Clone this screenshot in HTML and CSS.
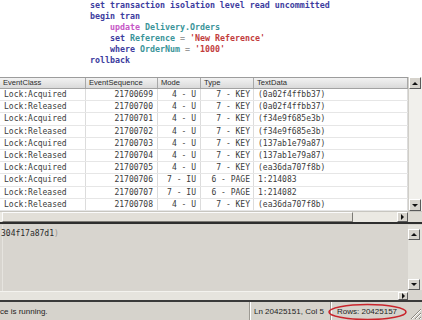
FILE: index.html
```html
<!DOCTYPE html>
<html>
<head>
<meta charset="utf-8">
<link rel="stylesheet" href="styles.css">
</head>
<body>
<div class="app">
  <pre class="editor"><span class="kw">set transaction isolation level read uncommitted</span>
<span class="kw">begin tran</span>
    <span class="dml">update</span> <span class="id">Delivery.Orders</span>
    <span class="kw">set</span> <span class="id">Reference</span> <span class="op">=</span> <span class="str">'New Reference'</span>
    <span class="kw">where</span> <span class="id">OrderNum</span> <span class="op">=</span> <span class="str">'1000'</span>
<span class="kw">rollback</span></pre>

  <div class="results">
    <div class="grid-area">
      <div class="grid">
        <div class="row head">
          <div class="c">EventClass</div>
          <div class="c">EventSequence</div>
          <div class="c">Mode</div>
          <div class="c">Type</div>
          <div class="c">TextData</div>
        </div>
        <div class="row"><div class="c">Lock:Acquired</div><div class="c r">21700699</div><div class="c r">4 - U</div><div class="c r t">7 - KEY</div><div class="c">(0a02f4ffbb37)</div></div>
        <div class="row"><div class="c">Lock:Released</div><div class="c r">21700700</div><div class="c r">4 - U</div><div class="c r t">7 - KEY</div><div class="c">(0a02f4ffbb37)</div></div>
        <div class="row"><div class="c">Lock:Acquired</div><div class="c r">21700701</div><div class="c r">4 - U</div><div class="c r t">7 - KEY</div><div class="c">(f34e9f685e3b)</div></div>
        <div class="row"><div class="c">Lock:Released</div><div class="c r">21700702</div><div class="c r">4 - U</div><div class="c r t">7 - KEY</div><div class="c">(f34e9f685e3b)</div></div>
        <div class="row"><div class="c">Lock:Acquired</div><div class="c r">21700703</div><div class="c r">4 - U</div><div class="c r t">7 - KEY</div><div class="c">(137ab1e79a87)</div></div>
        <div class="row"><div class="c">Lock:Released</div><div class="c r">21700704</div><div class="c r">4 - U</div><div class="c r t">7 - KEY</div><div class="c">(137ab1e79a87)</div></div>
        <div class="row"><div class="c">Lock:Acquired</div><div class="c r">21700705</div><div class="c r">4 - U</div><div class="c r t">7 - KEY</div><div class="c">(ea36da707f8b)</div></div>
        <div class="row"><div class="c">Lock:Acquired</div><div class="c r">21700706</div><div class="c r">7 - IU</div><div class="c r t">6 - PAGE</div><div class="c">1:214083</div></div>
        <div class="row"><div class="c">Lock:Released</div><div class="c r">21700707</div><div class="c r">7 - IU</div><div class="c r t">6 - PAGE</div><div class="c">1:214082</div></div>
        <div class="row"><div class="c">Lock:Released</div><div class="c r">21700708</div><div class="c r">4 - U</div><div class="c r t">7 - KEY</div><div class="c">(ea36da707f8b)</div></div>
      </div>
      <div class="vscroll">
        <div class="btn"><span class="arr up"></span></div>
        <div class="track"></div>
        <div class="btn"><span class="arr down"></span></div>
      </div>
    </div>
    <div class="hbar">
      <div class="htrack"><div class="hthumb"></div></div>
      <div class="btn hbtn"><span class="arr right"></span></div>
      <div class="corner"></div>
    </div>
  </div>

  <div class="splitter"></div>

  <div class="pane">
    <div class="pane-main">
      <div class="pane-text">304f17a87d1<span class="dim">)</span></div>
      <div class="hbar2">
        <div class="htrack2"></div>
        <div class="btn hbtn2"><span class="arr right"></span></div>
      </div>
    </div>
    <div class="vscroll2">
      <div class="btn"><span class="arr up"></span></div>
      <div class="track2"></div>
      <div class="btn"><span class="arr down"></span></div>
      <div class="corner2"></div>
    </div>
  </div>

  <div class="status">
    <div class="sp s1">ce is running.</div>
    <div class="sp s2">Ln 20425151, Col 5</div>
    <div class="sp s3">Rows: 20425157</div>
    <div class="grip">
      <svg width="14" height="14" viewBox="0 0 14 14"><path d="M13 3 L3 13 M13 7 L7 13 M13 11 L11 13" stroke="#8a877f" stroke-width="1" fill="none"/><path d="M13 4 L4 13 M13 8 L8 13 M13 12 L12 13" stroke="#fff" stroke-width="1" fill="none"/></svg>
    </div>
    <svg class="ring" width="82" height="18" viewBox="0 0 82 18"><ellipse cx="40.5" cy="9" rx="38.5" ry="7.5" fill="none" stroke="#c9252c" stroke-width="1.6"/></svg>
  </div>
</div>
</body>
</html>
```
FILE: styles.css
```css
* { box-sizing: border-box; margin: 0; padding: 0; }
html, body { width: 422px; height: 320px; overflow: hidden; background: #fff; }
body { font-family: "Liberation Sans", Arial, sans-serif; }

.app { display: flex; flex-direction: column; height: 320px; width: 422px; }

.editor {
  height: 77px;
  padding-left: 90px;
  font-family: "DejaVu Sans Mono", monospace;
  font-size: 8.3px;
  font-weight: bold;
  line-height: 11px;
  white-space: pre;
  color: #3a3a9c;
  background: #fff;
}
.kw { color: #3c3c9e; }
.dml { color: #c657c6; }
.id { color: #3a9499; }
.op { color: #9a9a9a; }
.str { color: #c23c3c; }

.results { height: 145px; display: flex; flex-direction: column; }
.grid-area { display: flex; height: 134px; }
.grid { flex: 1; overflow: hidden; background: #fff; }

.row {
  display: grid;
  grid-template-columns: 86px 72px 43px 53px 1fr;
  height: 12.2px;
  border-bottom: 1px solid #e6e6e6;
  font-family: "DejaVu Sans Mono", monospace;
  font-size: 8px;
  line-height: 11.2px;
  color: #3b3b3b;
}
.row .c {
  border-right: 1px solid #dcdcdc;
  padding: 0 4px;
  white-space: nowrap;
  overflow: hidden;
}
.row .c:first-child { padding-left: 4px; }
.row .r { text-align: right; }
.row .t { padding-right: 3px; }

.row.head {
  height: 12px;
  background: linear-gradient(#f2f2f2, #dadada);
  border-top: 1px solid #9c9c9c;
  border-bottom: 1px solid #a2a2a2;
  font-family: "Liberation Sans", Arial, sans-serif;
  font-size: 7.6px;
  line-height: 10px;
  color: #2a2a2a;
}
.row.head .c { border-right: 1px solid #a8a8a8; padding-left: 3px; }

.vscroll {
  width: 14px;
  display: flex;
  flex-direction: column;
  background: #f1f0ec;
  border-left: 1px solid #d0cec8;
}
.track { flex: 1; }

.btn {
  width: 12px;
  height: 12px;
  background: #d6d3cc;
  border: 1px solid;
  border-color: #fff #5a5a5a #5a5a5a #fff;
  display: flex;
  align-items: center;
  justify-content: center;
  flex: none;
}
.arr { width: 0; height: 0; border-style: solid; }
.arr.up { border-width: 0 3px 3px 3px; border-color: transparent transparent #111 transparent; }
.arr.down { border-width: 3px 3px 0 3px; border-color: #111 transparent transparent transparent; }
.arr.right { border-width: 3px 0 3px 3px; border-color: transparent transparent transparent #111; }

.hbar { display: flex; height: 11px; background: #ebe9e3; border-top: 1px solid #c8c6c0; }
.htrack { flex: 1; padding-left: 2px; display: flex; }
.hthumb {
  width: 351px;
  height: 100%;
  background: #e2dfd8;
  border: 1px solid;
  border-color: #fbfbfb #7c7a75 #7c7a75 #fbfbfb;
}
.hbtn { width: 11px; height: 10px; }
.corner { width: 14px; background: #dedbd4; }

.splitter { height: 3px; border-top: 2px solid #2e2e2e; background: #d6d3cc; }

.pane {
  height: 77px;
  display: flex;
  background: #d8d5cf;
  border-bottom: 2px solid #3a3a3a;
}
.pane-main { flex: 1; display: flex; flex-direction: column; }
.pane-text {
  flex: 1;
  font-family: "DejaVu Sans Mono", monospace;
  font-size: 8px;
  line-height: 12px;
  padding-top: 3px;
  color: #2a2a2a;
  border-left: 1px solid #e6e4df;
  margin-left: 2px;
  text-indent: -2px;
}
.pane-text .dim { color: #9a9892; }
.hbar2 { height: 9px; display: flex; border-top: 1px solid #f4f3ef; background: #e6e4de; }
.htrack2 { flex: 1; }
.hbtn2 { width: 10px; height: 8px; }

.vscroll2 {
  width: 14px;
  display: flex;
  flex-direction: column;
  background: #e4e2dc;
  padding-top: 4px;
}
.vscroll2 .btn { height: 11px; }
.track2 { flex: 1; }
.corner2 { height: 10px; background: #d8d5cf; }

.status {
  position: relative;
  height: 18px;
  display: flex;
  align-items: stretch;
  background: #d6d3cc;
  font-size: 8px;
  color: #1e1e1e;
}
.sp { display: flex; align-items: center; white-space: nowrap; padding-top: 1px; }
.s1 { width: 250px; border-right: 1px solid #9d9a93; }
.s2 { width: 81px; padding-left: 3px; border-left: 1px solid #fff; border-right: 1px solid #9d9a93; }
.s3 { width: 77px; padding-left: 5px; border-left: 1px solid #fff; }
.grip { flex: 1; display: flex; align-items: flex-end; justify-content: flex-end; }
.ring { position: absolute; left: 327px; top: 1px; }
```
